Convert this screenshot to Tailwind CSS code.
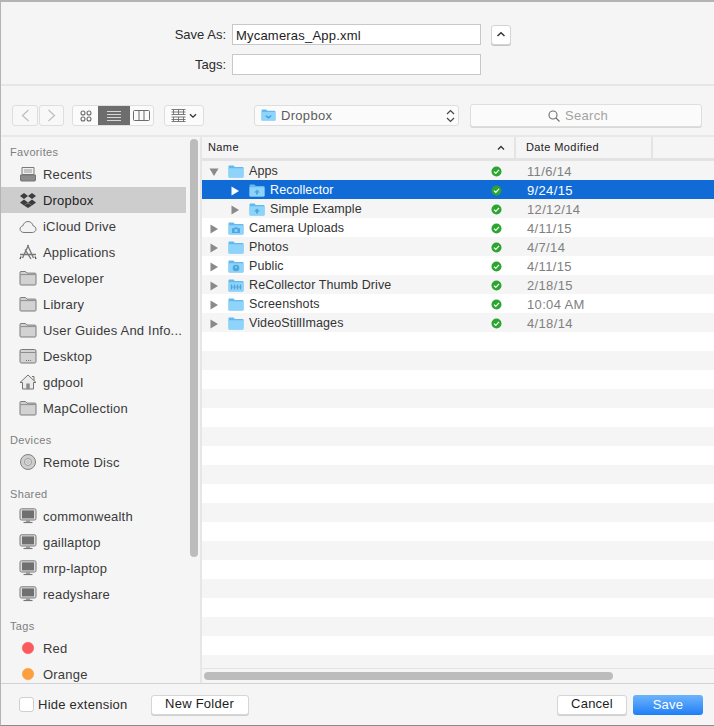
<!DOCTYPE html>
<html lang="en">
<head>
  <meta charset="UTF-8" />
  <title>Save dialog</title>
  <script src="https://cdn.jsdelivr.net/npm/@tailwindcss/browser@4"></script>
</head>
<body class="w-[714px] h-[726px] overflow-hidden bg-[#f5f5f5] font-['Liberation_Sans',Arial,sans-serif] text-[13px] text-[#2b2b2b]">
  <!-- shared icons -->
  <svg class="hidden">
    <symbol id="gray-folder" viewBox="0 0 18 16">
      <path d="M1 14V2.500c0-.6.4-1 1-1h4.500l1.300 1.600H16c.6 0 1 .4 1 1V14c0 .6-.4 1-1 1H2c-.6 0-1-.4-1-1z" fill="#d2d2d2" stroke="#7d7d7d"/>
      <path d="M1.500 4.600h15" stroke="#8d8d8d"/>
    </symbol>
    <symbol id="monitor" viewBox="0 0 18 16">
      <rect x="1" y=".8" width="16" height="11.200" rx="1.500" fill="#dcdcdc" stroke="#7b7b7b"/>
      <rect x="3" y="2.400" width="12" height="8" fill="#707070"/>
      <path d="M7 12.500h4v1.300H7z" fill="#8a8a8a"/>
      <path d="M4.500 14.500h9" stroke="#777" stroke-width="1.200"/>
    </symbol>
    <symbol id="blue-folder" viewBox="0 0 16 14">
      <path d="M.5 11.500V1.500c0-.6.4-1 1-1h4l1.300 1.500h7.700c.6 0 1 .4 1 1v8.500c0 .6-.4 1-1 1h-13c-.6 0-1-.4-1-1z" fill="#62b9ee"/>
      <path d="M.5 11.500V3.200h15v8.300c0 .6-.4 1-1 1h-13c-.6 0-1-.4-1-1z" fill="#8ed3fa"/>
    </symbol>
  </svg>

  <div class="relative h-full flex flex-col border-t-2 border-l border-t-[#b4b4b4] border-l-[#b4b4b4] border-b border-b-[#8c8c8c]">
    <!-- name + tags form -->
    <div class="h-[84px] shrink-0 pt-[22px] pl-[159px] border-b-2 border-[#e6e6e6]">
      <div class="flex items-center h-[21px]">
        <label class="w-[66px] h-[21px] leading-[22px] text-right">Save As:</label>
        <input value="Mycameras_App.xml" class="ml-[6px] w-[249px] h-[21px] pl-[3px] pt-[2px] bg-white border border-[#c8c8c8] tracking-[.2px] text-[#1c1c1c] outline-none" />
        <button class="ml-[10px] w-[20px] h-[20px] bg-white border border-[#d4d4d4] rounded-[3px] shadow-[0_1px_0_#c4c4c4] flex items-center justify-center">
          <svg width="10" height="7" viewBox="0 0 10 7"><path d="M1.500 5 5 1.700 8.500 5" fill="none" stroke="#333" stroke-width="1.500"/></svg>
        </button>
      </div>
      <div class="flex items-center h-[21px] mt-[9px]">
        <label class="w-[66px] h-[21px] leading-[22px] text-right">Tags:</label>
        <input class="ml-[6px] w-[249px] h-[21px] bg-white border border-[#c8c8c8] outline-none" />
      </div>
    </div>

    <!-- toolbar -->
    <div class="h-[51px] shrink-0 flex items-center pl-[11px] pt-[10px] border-b-2 border-[#e8e8e8]">
      <div class="flex w-[52px] h-[21px] gap-px">
        <div class="w-[26px] bg-[#f8f8f8] border border-[#dedede] rounded-[3px] flex items-center justify-center">
          <svg width="9" height="13" viewBox="0 0 9 13"><path d="M7.500 1 1.500 6.500l6 5.500" fill="none" stroke="#bdbdbd" stroke-width="1.200"/></svg>
        </div>
        <div class="w-[25px] bg-[#f8f8f8] border border-[#dedede] rounded-[3px] flex items-center justify-center">
          <svg width="9" height="13" viewBox="0 0 9 13"><path d="m1.500 1 6 5.500-6 5.500" fill="none" stroke="#bdbdbd" stroke-width="1.200"/></svg>
        </div>
      </div>
      <div class="ml-[8px] flex w-[82px] h-[21px] bg-[#fbfbfb] border border-[#dedede] rounded-[3px] overflow-hidden">
        <div class="w-[25px] flex items-center justify-center">
          <svg width="12" height="12" viewBox="0 0 12 12" fill="none" stroke="#6c6c6c" stroke-width="1.100"><circle cx="3" cy="3" r="2"/><circle cx="9" cy="3" r="2"/><circle cx="3" cy="9" r="2"/><circle cx="9" cy="9" r="2"/></svg>
        </div>
        <div class="w-[32px] bg-[#6d6d6d] flex items-center justify-center">
          <svg width="16" height="12" viewBox="0 0 16 12" stroke="#d6d6d6"><path d="M1 1.500h14M1 4.500h14M1 7.500h14M1 10.500h14"/></svg>
        </div>
        <div class="flex-1 flex items-center justify-center">
          <svg width="17" height="11" viewBox="0 0 17 11" fill="none" stroke="#6c6c6c"><rect x=".5" y=".5" width="16" height="10" rx="1"/><path d="M6 .5v10M11 .5v10"/></svg>
        </div>
      </div>
      <div class="ml-[10px] w-[40px] h-[21px] bg-[#fbfbfb] border border-[#dedede] rounded-[3px] flex items-center justify-center gap-[3px]">
        <svg width="15" height="13" viewBox="0 0 15 13" fill="none" stroke="#6c6c6c" stroke-width=".9"><path d="M.5 .5h14M.5 3h14M.5 5.500h14M.5 8h14M.5 10.500h14M.5 12.500h14M2.500 .5v5M7.500 .5v5M12.500 .5v5M2.500 8v4.500M7.500 8v4.500M12.500 8v4.500"/></svg>
        <svg width="8" height="6" viewBox="0 0 8 6"><path d="M1 1.200 4 4.200 7 1.200" fill="none" stroke="#333" stroke-width="1.300"/></svg>
      </div>
      <div class="ml-[50px] w-[205px] h-[21px] bg-[#fbfbfb] border border-[#dedede] rounded-[3px] flex items-center pl-[6px] pr-[3px]">
        <svg width="15" height="13" viewBox="0 0 16 14"><use href="#blue-folder"/><path d="m5 6.500 3 1.800 3-1.800v1.500L8 10.500 5 8z" fill="#3f9edb"/></svg>
        <span class="ml-[5px] flex-1 text-[#5c5c5c] tracking-[.3px]">Dropbox</span>
        <svg width="9" height="14" viewBox="0 0 9 14" fill="none" stroke="#444" stroke-width="1.200"><path d="M1 5 4.500 1.500 8 5M1 9l3.500 3.500L8 9"/></svg>
      </div>
      <div class="ml-[11px] w-[232px] h-[23px] bg-[#fbfbfb] border border-[#dedede] rounded-[3px] shadow-[0_1px_0_#d8d8d8] flex items-center justify-center gap-[5px] pr-[16px]">
        <svg width="12" height="12" viewBox="0 0 12 12" fill="none" stroke="#6e6e6e" stroke-width="1.100"><circle cx="5" cy="5" r="4"/><path d="m8 8 3.500 3.500"/></svg>
        <span class="text-[#a3a3a3] tracking-[.3px]">Search</span>
      </div>
    </div>

    <div class="flex-1 flex min-h-0">
      <!-- sidebar -->
      <div class="relative w-[201px] shrink-0 overflow-hidden border-r-2 border-[#e6e6e6]">
        <div id="sidebar" class="pt-[4px]"></div>
        <div class="absolute left-[189px] top-[2px] w-[8px] h-[418px] rounded-full bg-[#bcbcbc]"></div>
      </div>

      <!-- file list -->
      <div class="flex-1 min-w-0 flex flex-col bg-white">
        <div class="h-[24px] shrink-0 flex items-center bg-[#f5f5f5] border-b-[3px] border-[#e3e3e3] text-[11px] tracking-[.4px] text-[#222]">
          <div class="w-[314px] h-full pl-[6px] pr-[9px] flex items-center justify-between border-r-2 border-[#e4e4e4]">
            <span>Name</span>
            <svg width="8" height="6" viewBox="0 0 8 6"><path d="M1 4.500 4 1.500l3 3" fill="none" stroke="#333" stroke-width="1.300"/></svg>
          </div>
          <div class="w-[137px] h-full pl-[10px] flex items-center border-r-2 border-[#e4e4e4]">Date Modified</div>
        </div>
        <div id="rows" class="flex-1 min-h-0 overflow-hidden"></div>
        <div class="h-[15px] shrink-0 bg-[#f5f5f5] border-t border-[#e4e4e4] pt-[3px] pl-[2px]">
          <div class="w-[409px] h-[8px] rounded-full bg-[#bcbcbc]"></div>
        </div>
      </div>
    </div>

    <!-- bottom bar -->
    <div class="h-[42px] shrink-0 flex items-center pl-[18px] pr-[11px] border-t border-[#d2d2d2] bg-[#f5f5f5]">
      <div class="w-[15px] h-[15px] bg-white border border-[#cfcfcf] rounded-[3px]"></div>
      <span class="ml-[4px] tracking-[.25px]">Hide extension</span>
      <button class="ml-[23px] w-[98px] h-[20px] pb-[2px] leading-[14px] bg-white border border-[#d6d6d6] rounded-[3px] shadow-[0_1px_0_#cfcfcf] tracking-[.25px] text-[#1c1c1c]">New Folder</button>
      <button class="ml-auto w-[70px] h-[20px] pb-[2px] leading-[14px] bg-white border border-[#d6d6d6] rounded-[3px] shadow-[0_1px_0_#cfcfcf] tracking-[.25px] text-[#1c1c1c]">Cancel</button>
      <button class="ml-[6px] w-[70px] h-[20px] rounded-[3px] bg-gradient-to-b from-[#6cb3fa] to-[#1a7ef8] text-white tracking-[.25px]">Save</button>
    </div>
  </div>

  <script>
    const tray = `<path d="M3 1.500h12v7H3z" fill="#efefef" stroke="#7a7a7a"/><path d="M5 4h8M5 6h8" stroke="#9a9a9a"/><path d="M1.500 9h15v5c0 .6-.4 1-1 1h-13c-.6 0-1-.4-1-1z" fill="#8c8c8c" stroke="#757575"/>`;
    const dropbox = `<path d="M5 1 9 4 5 7 1 4zM13 1l4 3-4 3-4-3zM5 7.400l4 3-4 3-4-3zM13 7.400l4 3-4 3-4-3z" fill="#3c3c3c"/><path d="m5 13.600 4 2.400 4-2.400-4-2.700z" fill="#3c3c3c"/>`;
    const cloud = `<path d="M5 14.500c-2.200 0-4-1.400-4-3.400 0-1.700 1.200-3 2.900-3.300C4.500 5.300 6.500 3.500 9 3.500c2.700 0 4.700 1.900 5 4.300 1.700.3 3 1.600 3 3.300 0 2-1.700 3.400-3.800 3.400z" fill="#f3f3f3" stroke="#7a7a7a"/>`;
    const apps = `<path d="M9.500 1 3.500 14M8.500 1l6 13M1 10.500h16M6 5.500 12 15" fill="none" stroke="#777" stroke-width="1.300"/><path d="M2 12.500l-1 2.500M16 12.500l1 2.500" stroke="#555" stroke-width="1.300"/>`;
    const desktop = `<rect x="1" y="1.500" width="16" height="13.500" rx="1.500" fill="#d2d2d2" stroke="#7b7b7b"/><path d="M1.500 4.500h15" stroke="#8d8d8d"/><path d="M7 12.500h1M9 12.500h1M11 12.500h1" stroke="#777"/>`;
    const home = `<path d="M9 1 1 8.500h2.500V15h11V8.500H17z" fill="#ececec" stroke="#737373" stroke-linejoin="round"/><path d="M7.300 15V9.500h3.400V15z" fill="#8a8a8a"/><path d="M13 2.500h2v4" fill="none" stroke="#737373"/>`;
    const disc = `<circle cx="9" cy="8" r="7.500" fill="#cfcfcf" stroke="#808080"/><circle cx="9" cy="8" r="3.500" fill="#e2e2e2" stroke="#999"/><circle cx="9" cy="8" r="1.300" fill="#f5f5f5" stroke="#999" stroke-width=".7"/>`;
    const folder = `<use href="#gray-folder"/>`;
    const monitor = `<use href="#monitor"/>`;
    const tag = c => `<circle cx="9" cy="8" r="5.700" fill="${c}" stroke="${c}" stroke-opacity=".6"/>`;

    const side = [
      ["h", "Favorites"],
      [tray, "Recents"], [dropbox, "Dropbox", true], [cloud, "iCloud Drive"], [apps, "Applications"],
      [folder, "Developer"], [folder, "Library"], [folder, "User Guides And Info..."], [desktop, "Desktop"],
      [home, "gdpool"], [folder, "MapCollection"],
      ["h", "Devices"], [disc, "Remote Disc"],
      ["h", "Shared"],
      [monitor, "commonwealth"], [monitor, "gaillaptop"], [monitor, "mrp-laptop"], [monitor, "readyshare"],
      ["h", "Tags"], [tag("#fb5a5c"), "Red"], [tag("#fd9f3e"), "Orange"]
    ];

    let firstHeading = true;
    document.getElementById("sidebar").innerHTML = side.map(([icon, label, active]) => {
      if (icon === "h") {
        const cls = firstHeading ? "" : "mt-[8px]";
        firstHeading = false;
        return `<div class="${cls} h-[20px] pl-[9px] pt-[2px] flex items-center text-[11px] tracking-[.35px] text-[#7e7e7e]">${label}</div>`;
      }
      return `<div class="h-[26px] w-[185px] pl-[18px] flex items-center ${active ? "bg-[#cdcdcd]" : ""}">
        <svg width="18" height="16" viewBox="0 0 18 16" class="shrink-0">${icon}</svg>
        <span class="ml-[6px] pt-[2px] whitespace-nowrap tracking-[.2px] ${active ? "text-[#222]" : "text-[#3b3b3b]"}">${label}</span>
      </div>`;
    }).join("");

    const glyphs = {
      none: "",
      app: `<path d="M8 5.500 11 8.500H9V10.500H7V8.500H5z" fill="#4ea6dd"/>`,
      camera: `<path d="M4 6.200h2l1-1h2l1 1h2v4.800H4z" fill="#4ea6dd"/><circle cx="8" cy="8.500" r="1.500" fill="#8ed3fa"/>`,
      pub: `<circle cx="8" cy="8" r="3.300" fill="#4ea6dd"/><circle cx="8" cy="7.300" r="1" fill="#8ed3fa"/>`,
      drive: `<path d="M3.500 5.500v5M6.500 5.500v5M9.500 5.500v5M12.500 5.500v5M2.500 8h11" stroke="#4ea6dd" stroke-width="1.200"/>`
    };

    const files = [
      [0, "Apps", "11/6/14", "none", "open"],
      [1, "Recollector", "9/24/15", "app", "sel"],
      [1, "Simple Example", "12/12/14", "app"],
      [0, "Camera Uploads", "4/11/15", "camera"],
      [0, "Photos", "4/7/14", "none"],
      [0, "Public", "4/11/15", "pub"],
      [0, "ReCollector Thumb Drive", "2/18/15", "drive"],
      [0, "Screenshots", "10:04 AM", "none"],
      [0, "VideoStillImages", "4/18/14", "none"]
    ];

    const rowHtml = files.map(([depth, name, date, glyph, state]) => {
      const sel = state === "sel";
      const arrow = state === "open"
        ? `<path d="M.5 2.500h9L5 10z" fill="#8a8a8a"/>`
        : `<path d="M1.500 1.500 9 6l-7.500 4.500z" fill="${sel ? "#fff" : "#8a8a8a"}"/>`;
      return `<div class="relative h-[19px] pt-[2px] flex items-center ${sel ? "bg-[#116bd6] text-white" : ""} odd:bg-[#f5f5f5]">
        <svg width="10" height="12" viewBox="0 0 10 12" class="shrink-0 ${depth ? "ml-[28px]" : "ml-[7px]"}">${arrow}</svg>
        <svg width="16" height="14" viewBox="0 0 16 14" class="shrink-0 ml-[9px]"><use href="#blue-folder"/>${glyphs[glyph]}</svg>
        <span class="ml-[5px] w-[226px] whitespace-nowrap text-[12.5px] tracking-[.1px] ${sel ? "" : "text-[#333]"}">${name}</span>
        <svg width="11" height="11" viewBox="0 0 11 11" class="absolute left-[289px] top-[5px]"><circle cx="5.500" cy="5.500" r="5" fill="#2aa52f"/><path d="m3 5.600 1.800 1.800L8 3.900" fill="none" stroke="#fff" stroke-width="1.300"/></svg>
        <span class="absolute left-[325px] top-[1px] tracking-[.35px] ${sel ? "" : "text-[#808080]"}">${date}</span>
      </div>`;
    }).join("");
    document.getElementById("rows").innerHTML = rowHtml + Array.from({ length: 20 }, () => `<div class="h-[19px] odd:bg-[#f5f5f5]"></div>`).join("");
  </script>
</body>
</html>
